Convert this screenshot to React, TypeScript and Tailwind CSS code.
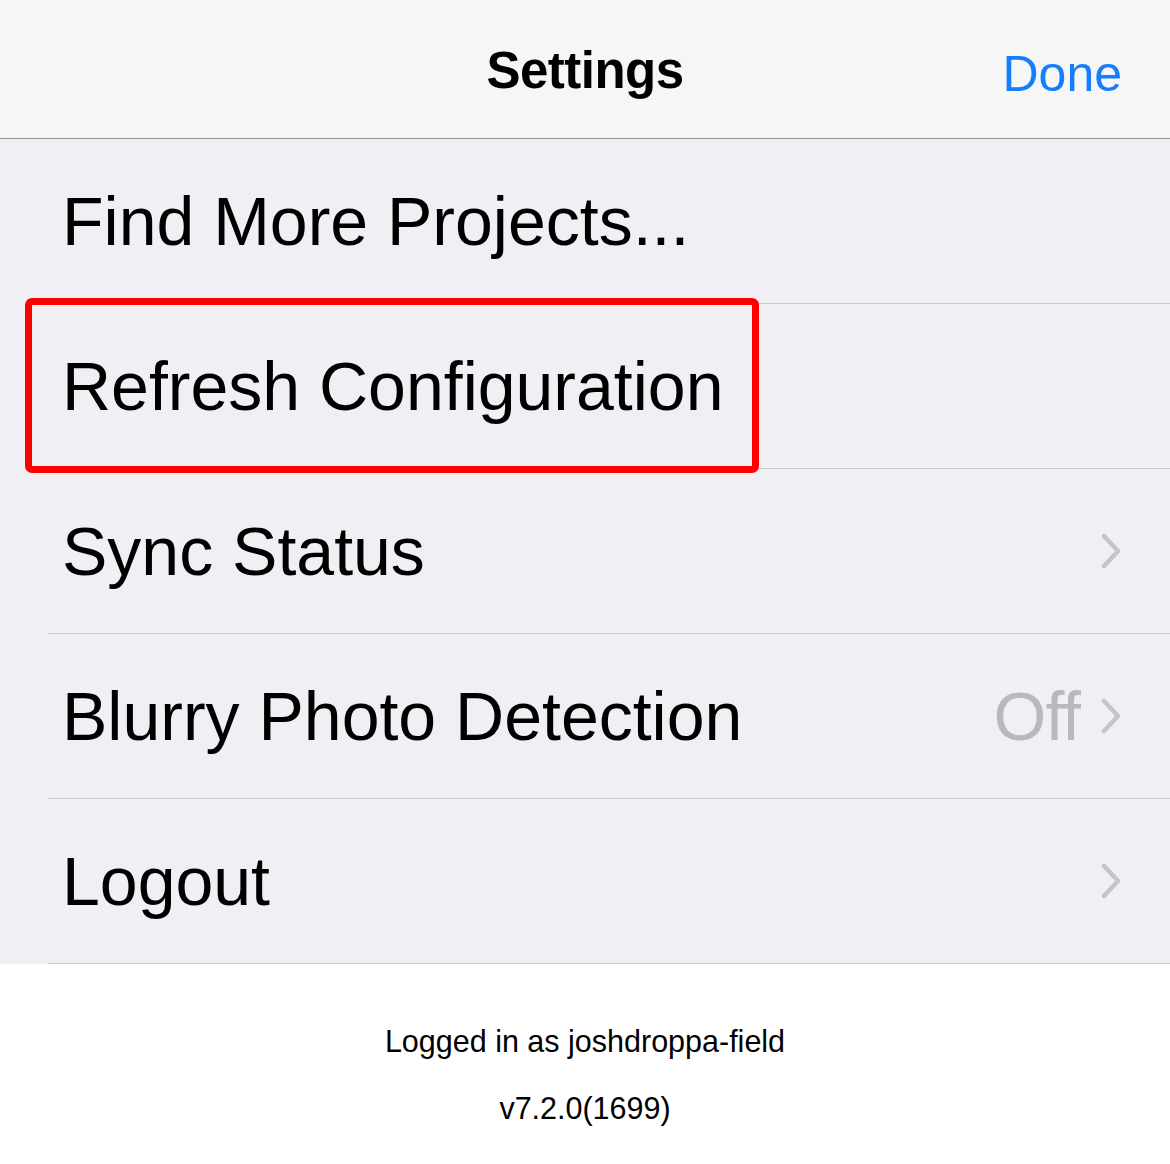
const font = { fontFamily: '"Liberation Sans", Arial, sans-serif' }

function Chevron() {
  return (
    <svg width="22" height="36" viewBox="0 0 22 36" className="shrink-0">
      <path d="M4 3 L18 18 L4 33" fill="none" stroke="#c4c4c9" strokeWidth="4.5" strokeLinecap="round" strokeLinejoin="round" />
    </svg>
  )
}

type Row = { label: string; value?: string; chevron?: boolean }

const rows: Row[] = [
  { label: 'Find More Projects...' },
  { label: 'Refresh Configuration' },
  { label: 'Sync Status', chevron: true },
  { label: 'Blurry Photo Detection', value: 'Off', chevron: true },
  { label: 'Logout', chevron: true },
]

export default function App() {
  return (
    <div className="w-[1170px] h-[1164px] bg-white flex flex-col overflow-hidden" style={font}>
      {/* nav bar */}
      <header className="h-[139px] shrink-0 bg-[#f6f6f6] border-b border-[#929292] relative flex items-center justify-center">
        <h1 className="text-[51px] font-semibold text-black tracking-[-0.5px] mt-[5px]">Settings</h1>
        <button className="absolute right-[48px] top-[43px] text-[50px] leading-[62px] text-[#147efb]">Done</button>
      </header>

      {/* rows */}
      <div className="bg-[#efeff4] relative">
        {rows.map((row, i) => (
          <div key={i} className="h-[165px] pl-[48px] flex">
            <div className="flex-1 flex items-center pr-[48px] border-b border-[#c8c7cc]">
              <span className="flex-1 pl-[14px] text-[68px] text-black whitespace-nowrap">{row.label}</span>
              {row.value && (
                <span className="text-[68px] text-[#b8b8bd] mr-[20px] tracking-[-1px]">{row.value}</span>
              )}
              {row.chevron && <Chevron />}
            </div>
          </div>
        ))}
        {/* highlight box */}
        <div className="absolute left-[25px] top-[159px] w-[734px] h-[175px] border-[7px] border-[#ff0000] rounded-[7px] pointer-events-none" />
      </div>

      {/* footer */}
      <footer className="flex-1 flex flex-col items-center pt-[61px] gap-[35px] text-[30.5px] text-black">
        <p className="leading-[32px]">Logged in as joshdroppa-field</p>
        <p className="leading-[32px]">v7.2.0(1699)</p>
      </footer>
    </div>
  )
}
